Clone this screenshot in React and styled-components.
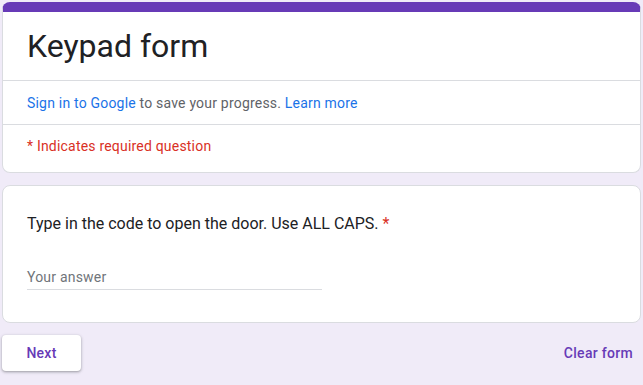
import React from "react";
import styled, { createGlobalStyle } from "styled-components";

const GlobalStyle = createGlobalStyle`
  html, body {
    margin: 0;
    padding: 0;
    background-color: #f0ebf8;
    font-family: Roboto, "Liberation Sans", Arial, sans-serif;
  }
`;

const Page = styled.div`
  width: 643px;
  height: 385px;
  box-sizing: border-box;
  padding: 2px 2px 0 2px;
  display: flex;
  flex-direction: column;
  gap: 12px;
  background-color: #f0ebf8;
  overflow: hidden;
`;

const Card = styled.div`
  background-color: #fff;
  border: 1px solid #dadce0;
  border-radius: 8px;
  overflow: hidden;
  box-sizing: border-box;
  ${(props) => props.accent && `border-top: 10px solid #673ab7;`}
`;

const TitleBlock = styled.div`
  padding: 16px 24px 16px 24px;
  border-bottom: 1px solid #dadce0;
`;

const Title = styled.h1`
  margin: 0;
  font-family: Roboto, "Open Sans", sans-serif;
  font-weight: 400;
  font-size: 32px;
  line-height: 36px;
  color: #202124;
`;

const Row = styled.div`
  box-sizing: border-box;
  padding: 0 24px ${(props) => props.bottom || 0}px 24px;
  height: ${(props) => props.height || 44}px;
  display: flex;
  align-items: center;
  font-size: 14px;
  letter-spacing: 0.2px;
  color: ${(props) => props.color || "#5f6368"};
  border-bottom: ${(props) => (props.divided ? "1px solid #dadce0" : "none")};
`;

const Link = styled.a`
  color: #1a73e8;
  text-decoration: none;
`;

const Question = styled.div`
  padding: 26px 24px 32px 24px;
`;

const Label = styled.div`
  font-size: 16px;
  line-height: 24px;
  color: #202124;

  span {
    color: #d93025;
  }
`;

const Answer = styled.div`
  margin-top: 28px;
  width: 295px;
  height: 26px;
  box-sizing: border-box;
  display: flex;
  align-items: center;
  font-size: 14px;
  letter-spacing: 0.2px;
  color: #70757a;
  border-bottom: 1px solid #dadce0;
`;

const Actions = styled.div`
  display: flex;
  justify-content: space-between;
  align-items: center;
`;

const NextButton = styled.button`
  width: 79px;
  height: 36px;
  border: none;
  border-radius: 4px;
  background-color: #fff;
  box-shadow: 0 1px 2px rgba(60, 64, 67, 0.3), 0 1px 3px 1px rgba(60, 64, 67, 0.15);
  color: #673ab7;
  font-family: Roboto, "Open Sans", sans-serif;
  font-size: 14px;
  font-weight: 500;
  letter-spacing: 0.25px;
  cursor: pointer;
`;

const ClearButton = styled.button`
  border: none;
  background: none;
  padding: 0 8px;
  height: 36px;
  color: #673ab7;
  font-family: Roboto, "Open Sans", sans-serif;
  font-size: 14px;
  font-weight: 500;
  letter-spacing: 0.3px;
  cursor: pointer;
`;

const App = () => {
  return (
    <>
      <GlobalStyle />
      <Page>
        <Card accent>
          <TitleBlock>
            <Title>Keypad form</Title>
          </TitleBlock>
          <Row divided>
            <span>
              <Link href="#none">Sign in to Google</Link> to save your progress.{" "}
              <Link href="#none">Learn more</Link>
            </span>
          </Row>
          <Row height={47} bottom={5} color="#d93025">
            * Indicates required question
          </Row>
        </Card>
        <Card>
          <Question>
            <Label>
              Type in the code to open the door. Use ALL CAPS. <span>*</span>
            </Label>
            <Answer>Your answer</Answer>
          </Question>
        </Card>
        <Actions>
          <NextButton>Next</NextButton>
          <ClearButton>Clear form</ClearButton>
        </Actions>
      </Page>
    </>
  );
};

export default App;
